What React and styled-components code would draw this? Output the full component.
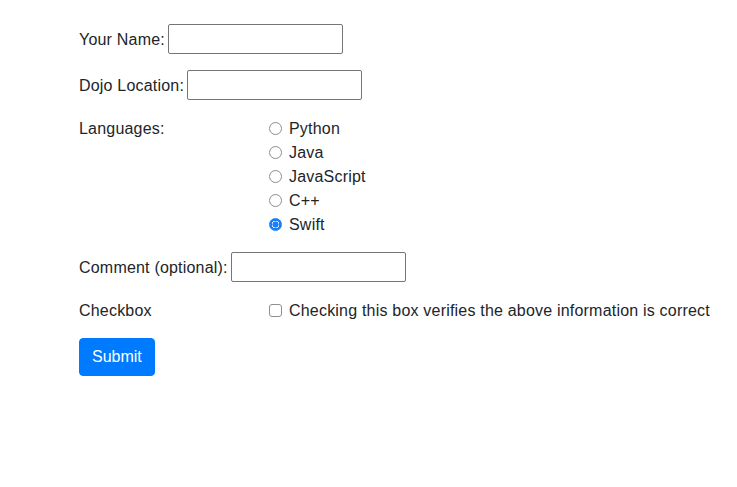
import React from 'react';
import styled, { createGlobalStyle } from 'styled-components';

const GlobalStyle = createGlobalStyle`
  body {
    margin: 0;
    background: #fff;
    font-family: "Liberation Sans", Arial, sans-serif;
    font-size: 16px;
    line-height: 1.5;
    letter-spacing: 0.2px;
    color: #212529;
  }
`;

const languages = ['Python', 'Java', 'JavaScript', 'C++', 'Swift'];

const App = () => {
  return (
    <>
      <GlobalStyle />
      <Page>
        <Form onSubmit={(e) => e.preventDefault()}>
          <Group>
            <InlineLabel htmlFor="name">Your Name:</InlineLabel>
            <TextInput id="name" type="text" />
          </Group>
          <Group>
            <InlineLabel htmlFor="dojo">Dojo Location:</InlineLabel>
            <TextInput id="dojo" type="text" />
          </Group>
          <Group>
            <ColumnLabel>Languages:</ColumnLabel>
            <Options>
              {languages.map((lang) => (
                <Option key={lang}>
                  <Radio type="radio" name="lang" defaultChecked={lang === 'Swift'} />
                  {lang}
                </Option>
              ))}
            </Options>
          </Group>
          <Group>
            <InlineLabel htmlFor="comment">Comment (optional):</InlineLabel>
            <TextInput id="comment" type="text" />
          </Group>
          <Group>
            <ColumnLabel>Checkbox</ColumnLabel>
            <Option>
              <Check type="checkbox" />
              Checking this box verifies the above information is correct
            </Option>
          </Group>
          <SubmitButton type="submit">Submit</SubmitButton>
        </Form>
      </Page>
    </>
  );
};

export default App;

const Page = styled.div`
  padding: 24px 0 0 79px;
`;

const Form = styled.form`
  display: flex;
  flex-direction: column;
  align-items: flex-start;
  gap: 16px;
`;

const Group = styled.div`
  display: flex;
  align-items: center;
`;

const InlineLabel = styled.label`
  margin-right: 3px;
  padding-top: 1px;
  white-space: nowrap;
`;

const ColumnLabel = styled.span`
  box-sizing: border-box;
  width: 190px;
  height: 24px;
  padding-top: 1px;
  align-self: flex-start;
`;

const TextInput = styled.input`
  box-sizing: border-box;
  width: 175px;
  height: 30px;
  border: 1px solid #767676;
  border-radius: 2px;
  padding: 2px 4px;
  font: inherit;
  background: #fff;
  outline: none;
`;

const Options = styled.div`
  display: flex;
  flex-direction: column;
`;

const Option = styled.label`
  box-sizing: border-box;
  display: flex;
  align-items: center;
  height: 24px;
  gap: 7px;
  padding-top: 1px;
  white-space: nowrap;
`;

const Radio = styled.input`
  appearance: none;
  box-sizing: border-box;
  width: 13px;
  height: 13px;
  margin: 0 0 1px;
  border: 1px solid #8e8e8e;
  border-radius: 50%;
  background: #fff;

  &:checked {
    border: 1.5px solid #1a7ffb;
    background: radial-gradient(circle, #1a7ffb 2.8px, #dceaff 3.3px, #dceaff 3.6px, #1a7ffb 4px);
  }
`;

const Check = styled.input`
  appearance: none;
  box-sizing: border-box;
  width: 13px;
  height: 13px;
  margin: 0 0 1px;
  border: 1px solid #8e8e8e;
  border-radius: 3px;
  background: #fff;
`;

const SubmitButton = styled.button`
  height: 38px;
  padding: 0 12px;
  border: 1px solid #007bff;
  border-radius: 4px;
  background: #007bff;
  color: #fff;
  font: inherit;
  cursor: pointer;
`;
